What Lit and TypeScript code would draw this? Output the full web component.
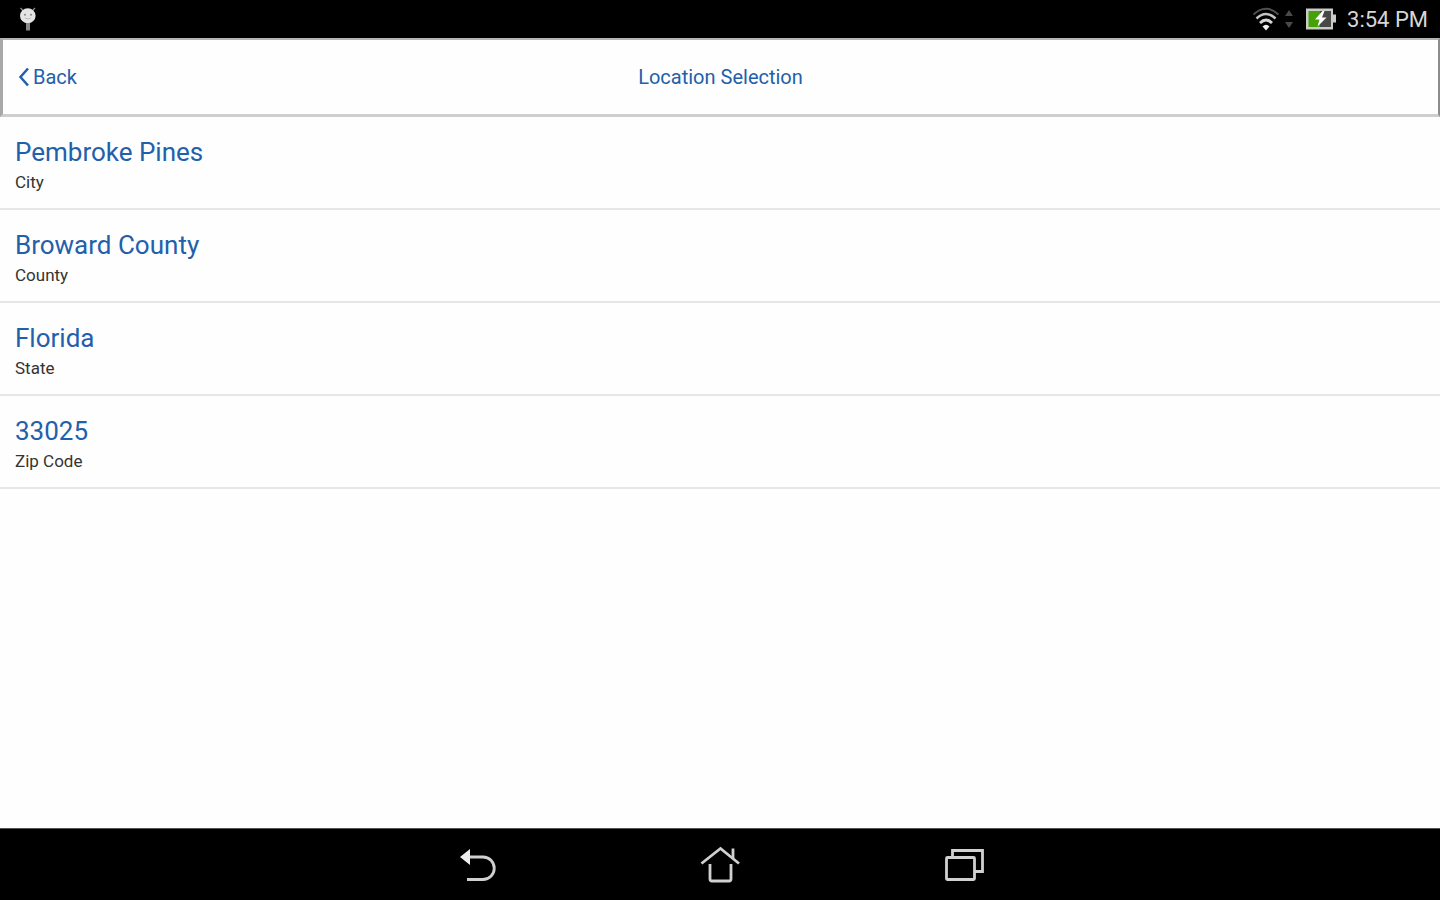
import { LitElement, html, css } from "lit";
import { customElement, property } from "lit/decorators.js";

interface Place {
  name: string;
  kind: string;
}

const places: Place[] = [
  { name: "Pembroke Pines", kind: "City" },
  { name: "Broward County", kind: "County" },
  { name: "Florida", kind: "State" },
  { name: "33025", kind: "Zip Code" },
];

@customElement("status-bar")
export class StatusBar extends LitElement {
  static styles = css`
    :host {
      display: flex;
      align-items: center;
      justify-content: space-between;
      height: 38px;
      padding: 0 12px 0 18px;
      box-sizing: border-box;
      background: #000;
      color: #d6d6d6;
    }
    svg {
      display: block;
    }
    .indicators {
      display: flex;
      align-items: center;
    }
    .traffic {
      margin: 0 12px 0 4px;
    }
    .clock {
      margin-left: 10px;
      font-size: 22px;
      line-height: 24px;
      padding-top: 2px;
    }
  `;

  render() {
    return html`
      <svg width="20" height="26" viewBox="0 0 20 26" aria-label="Notification">
        <path d="M2.5 2L5.5 5M17 2L14 5" stroke="#888" stroke-width="1.4" />
        <ellipse cx="9.8" cy="9.8" rx="7.8" ry="7.5" fill="#e4e4e4" />
        <path d="M8 17h4v7.500h-4z" fill="#888" />
        <circle cx="7" cy="8.8" r="1" fill="#888" />
        <circle cx="13" cy="8.8" r="1" fill="#888" />
        <path d="M7 12q3 2 6 0" fill="none" stroke="#bbb" />
      </svg>
      <div class="indicators">
        <svg width="28" height="26" viewBox="0 0 28 26" fill="none" aria-label="Wi-Fi">
          <path d="M1.500 8.500Q14-3 26.500 8.500" stroke="#505050" stroke-width="2" />
          <path d="M4.500 12.500Q14 3.500 23.500 12.500" stroke="#c4c4c4" stroke-width="2.600" />
          <path d="M8 17Q14 11 20 17" stroke="#d5d5d5" stroke-width="2.800" />
          <path d="M14 24.500l-3.500-4q3.500-3.400 7 0z" fill="#f0f0f0" />
        </svg>
        <svg class="traffic" width="10" height="20" viewBox="0 0 10 20" fill="#4a4a4a" aria-hidden="true">
          <path d="M5 1l4 6H1zM5 19l4-6H1z" />
        </svg>
        <svg width="31" height="24" viewBox="0 0 31 24" aria-label="Battery charging">
          <path d="M0 1.500h27v6h3v8h-3v7H0z" fill="#c9cdc6" />
          <path d="M2.500 4h11.500v16H2.500z" fill="#46a008" />
          <path d="M14 4h11v16H14z" fill="#484848" />
          <path d="M16.500 4L9 12.500h4.500L11.500 19.500l9-9H16l2.500-6.500z" fill="#fff" />
        </svg>
        <span class="clock">3:54 PM</span>
      </div>
    `;
  }
}

@customElement("title-bar")
export class TitleBar extends LitElement {
  static styles = css`
    :host {
      display: grid;
      grid-template-columns: 1fr auto 1fr;
      align-items: center;
      height: 79px;
      padding: 0 15px;
      box-sizing: border-box;
      border: solid;
      border-width: 2px 2px 3px 3px;
      border-color: #b4b4b4 #8c8c8c #cecece #a8a8a8;
      color: #2260ab;
    }
    .back {
      display: flex;
      align-items: center;
      justify-self: start;
      gap: 3px;
      padding: 0;
      border: 0;
      background: none;
      color: inherit;
      font: inherit;
      font-size: 20px;
      line-height: 24px;
      cursor: pointer;
    }
    .title {
      margin: 0;
      font-size: 20px;
      line-height: 24px;
      font-weight: 400;
    }
  `;

  @property() heading = "";

  render() {
    return html`
      <button class="back" type="button">
        <svg width="12" height="20" viewBox="0 0 12 20" fill="none" aria-hidden="true">
          <path d="M10 1.500L2.500 10L10 18.500" stroke="currentColor" stroke-width="2.500" />
        </svg>
        Back
      </button>
      <h1 class="title">${this.heading}</h1>
    `;
  }
}

@customElement("nav-bar")
export class NavBar extends LitElement {
  static styles = css`
    :host {
      display: flex;
      align-items: center;
      justify-content: center;
      gap: 204px;
      height: 72px;
      box-sizing: border-box;
      border-top: 1px solid #555;
      background: #000;
    }
    .key {
      display: block;
      padding: 0;
      border: 0;
      background: none;
      color: #d0d0d0;
      cursor: pointer;
    }
    svg {
      display: block;
    }
  `;

  render() {
    return html`
      <button class="key" type="button" aria-label="Back">
        <svg width="40" height="40" viewBox="0 0 40 40" fill="none">
          <path d="M12 12H27A11.250 11.250 0 0 1 27 34.500H11" stroke="currentColor" stroke-width="2.800" />
          <path d="M4 12L14 4V20z" fill="#f0f0f0" />
        </svg>
      </button>
      <button class="key" type="button" aria-label="Home">
        <svg width="40" height="40" viewBox="0 0 40 40" fill="none" stroke="currentColor" stroke-width="2.800">
          <path d="M1.500 18.500L20.500 3.500L39 18.500" />
          <path d="M10 19V34Q10 36 12 36H29Q31 36 31 34V19" />
          <path d="M33 3.500V13" />
        </svg>
      </button>
      <button class="key" type="button" aria-label="Recent apps">
        <svg width="40" height="40" viewBox="0 0 40 40" fill="none" stroke="currentColor" stroke-width="2.800">
          <rect x="2.500" y="12.500" width="28" height="22" rx="1" />
          <path d="M8.500 12V5.500H38.500V26.500H31" />
        </svg>
      </button>
    `;
  }
}

@customElement("app-root")
export class AppRoot extends LitElement {
  static styles = css`
    :host {
      display: flex;
      flex-direction: column;
      min-height: 100vh;
      background: #fefefe;
      font-family: Roboto, "Liberation Sans", sans-serif;
    }
    .list {
      flex: 1;
      margin: 0;
      padding: 0;
      list-style: none;
    }
    .item {
      border-bottom: 2px solid #e6e6e6;
    }
    .place {
      display: flex;
      flex-direction: column;
      width: 100%;
      padding: 18px 15px 13px;
      border: 0;
      background: none;
      font: inherit;
      text-align: left;
      cursor: pointer;
    }
    .name {
      color: #2260ab;
      font-size: 26px;
      line-height: 34px;
    }
    .kind {
      color: #333;
      font-size: 17px;
      line-height: 26px;
    }
  `;

  render() {
    return html`
      <status-bar></status-bar>
      <title-bar heading="Location Selection"></title-bar>
      <ul class="list">
        ${places.map(
          (place) => html`
            <li class="item">
              <button class="place" type="button">
                <span class="name">${place.name}</span>
                <span class="kind">${place.kind}</span>
              </button>
            </li>
          `
        )}
      </ul>
      <nav-bar></nav-bar>
    `;
  }
}
